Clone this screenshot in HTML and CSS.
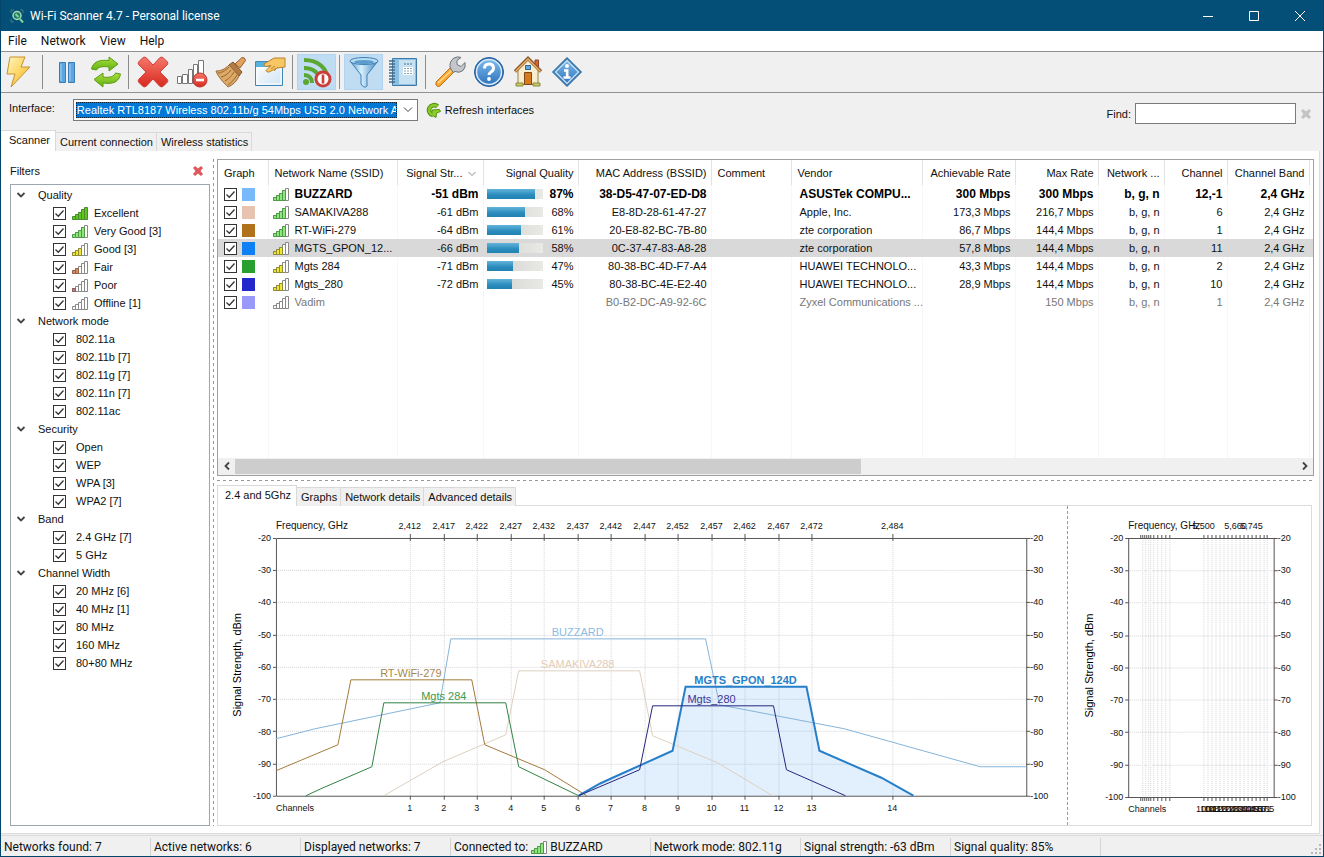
FILE: index.html
```html
<!DOCTYPE html>
<html lang="en">
<head>
<meta charset="utf-8">
<title>Wi-Fi Scanner 4.7 - Personal license</title>
<link rel="stylesheet" href="styles.css">
</head>
<body>
<svg class="defs" width="0" height="0" aria-hidden="true">
  <defs>
    <linearGradient id="gGold" x1="0" y1="0" x2="1" y2="1"><stop offset="0" stop-color="#fff6c0"/><stop offset=".5" stop-color="#fbd765"/><stop offset="1" stop-color="#eda52a"/></linearGradient>
    <linearGradient id="gBlue" x1="0" y1="0" x2="0" y2="1"><stop offset="0" stop-color="#7db9ea"/><stop offset="1" stop-color="#2f74bd"/></linearGradient>
    <linearGradient id="gGreen" x1="0" y1="0" x2="0" y2="1"><stop offset="0" stop-color="#a9e03c"/><stop offset="1" stop-color="#5fae10"/></linearGradient>
    <linearGradient id="gRed" x1="0" y1="0" x2="0" y2="1"><stop offset="0" stop-color="#f5776a"/><stop offset="1" stop-color="#d8291f"/></linearGradient>
    <linearGradient id="gIce" x1="0" y1="0" x2="1" y2="0"><stop offset="0" stop-color="#4f97cf"/><stop offset=".4" stop-color="#d9f0fc"/><stop offset="1" stop-color="#3f86c2"/></linearGradient>
    <linearGradient id="gPage" x1="0" y1="0" x2="1" y2="1"><stop offset="0" stop-color="#ffffff"/><stop offset="1" stop-color="#cfe3f3"/></linearGradient>
    <path id="bars" d="M.5 10.500h3v3h-3zM3.500 8.500h3v5h-3zM6.500 6.500h3v7h-3zM9.500 3.500h3v10h-3zM12.500 1.500h3v12h-3z"/>
    <symbol id="q5" viewBox="0 0 16 14"><use href="#bars" fill="#5fc81e" stroke="#4c8a30"/></symbol>
    <symbol id="q4" viewBox="0 0 16 14"><use href="#bars" fill="#fff" stroke="#888"/><path d="M.5 10.500h3v3h-3zM3.500 8.500h3v5h-3zM6.500 6.500h3v7h-3zM9.500 3.500h3v10h-3z" fill="#8fe67c" stroke="#4f9a48"/></symbol>
    <symbol id="q3" viewBox="0 0 16 14"><use href="#bars" fill="#fff" stroke="#888"/><path d="M.5 10.500h3v3h-3zM3.500 8.500h3v5h-3zM6.500 6.500h3v7h-3z" fill="#f0e63a" stroke="#8f8a34"/></symbol>
    <symbol id="q2" viewBox="0 0 16 14"><use href="#bars" fill="#fff" stroke="#888"/><path d="M.5 10.500h3v3h-3zM3.500 8.500h3v5h-3z" fill="#d98a5c" stroke="#94664c"/></symbol>
    <symbol id="q1" viewBox="0 0 16 14"><use href="#bars" fill="#fff" stroke="#888"/><path d="M.5 10.500h3v3h-3z" fill="#c08080" stroke="#8a5a5a"/></symbol>
    <symbol id="q0" viewBox="0 0 16 14"><use href="#bars" fill="#fff" stroke="#888"/></symbol>
    <symbol id="chev" viewBox="0 0 10 10"><path d="M1.500 3l3.500 3.500L8.500 3" fill="none" stroke="#444" stroke-width="1.800"/></symbol>
    <symbol id="cross" viewBox="0 0 12 12"><path d="M1 3l2-2 3 2.500L9 1l2 2-2.500 3L11 9l-2 2-3-2.500L3 11 1 9l2.500-3z"/></symbol>
  </defs>
</svg>

<div class="window">
  <header class="titlebar">
    <svg class="app-icon" width="14" height="14" viewBox="0 0 14 14"><path d="M1 4V1h3M10 1h3v3M1 10v3h3" fill="none" stroke="#3f7f7a"/><circle cx="7" cy="6.500" r="4" fill="#1c7a63" stroke="#a9d8b8" stroke-width="1.500"/><path d="M5.500 5l3 3M10 10l3 3.500" stroke="#7cd89a" stroke-width="2"/></svg>
    <h1>Wi-Fi Scanner 4.7 - Personal license</h1>
    <div class="win-controls">
      <button aria-label="Minimize"><svg width="10" height="10"><path d="M0 5.500h10" stroke="#fff"/></svg></button>
      <button aria-label="Maximize"><svg width="10" height="10"><path d="M.5.5h9v9h-9z" fill="none" stroke="#fff"/></svg></button>
      <button aria-label="Close"><svg width="10" height="10"><path d="M0 0l10 10M10 0L0 10" stroke="#fff"/></svg></button>
    </div>
  </header>

  <nav class="menubar">
    <button>File</button><button>Network</button><button>View</button><button>Help</button>
  </nav>

  <div class="toolbar" role="toolbar" aria-label="Main toolbar">
    <button aria-label="Start scan"><svg width="32" height="32" viewBox="0 0 32 32"><path d="M7 1h15l-4 10h9L8 31l4-13H4z" fill="url(#gGold)" stroke="#c9922c" stroke-linejoin="round"/></svg></button>
    <span class="sep"></span>
    <button aria-label="Pause"><svg width="32" height="32" viewBox="0 0 32 32"><path d="M8.500 6.500h6v20h-6zM17.500 6.500h6v20h-6z" fill="#5ba6e0" stroke="#3b7cb4"/><path d="M10 8v17M19 8v17" stroke="#a5d3f4"/></svg></button>
    <button aria-label="Rescan"><svg width="32" height="32" viewBox="0 0 32 32" fill="url(#gGreen)" stroke="#5c9a14"><path d="M1.500 13C3 6 9 3.500 19 4.500V1l9 7-9 7v-4C12 10 8 11 6.500 14z"/><path d="M30.500 18C29 26 23 28.500 13 27v4l-9-7.500 9-6.500v4c7 1 11-.5 12.500-4z"/></svg></button>
    <span class="sep"></span>
    <button aria-label="Delete"><svg width="32" height="32" viewBox="0 0 32 32"><path d="M1.500 6L6 1.500q2-1 3.500.5L16 9l6.500-7q1.500-1.500 3.500-.5L30.500 6q.8 1.500-.5 3l-7 7 7 7q1.300 1.500.5 3L26 30.500q-2 1-3.500-.5L16 23l-6.500 7q-1.500 1.500-3.500.5L1.500 26q-.8-1.500.5-3l7-7-7-7q-1.300-1.500-.5-3z" fill="url(#gRed)" stroke="#cf4339"/></svg></button>
    <button aria-label="Remove inactive networks"><svg width="32" height="32" viewBox="0 0 32 32"><path d="M1.500 20.500h4v7h-4zM6.500 18.500h5v9h-5zM12.500 13.500h4v14h-4zM17.500 8.500h4v19h-4zM22.500 4.500h5v23h-5z" fill="#fff" stroke="#777"/><circle cx="24" cy="24" r="7" fill="url(#gRed)" stroke="#b9352c"/><path d="M20 24h8" stroke="#fff" stroke-width="2.600"/></svg></button>
    <button aria-label="Clear"><svg width="32" height="32" viewBox="0 0 32 32"><path d="M20 8l7-6.500q3-.5 3.500 3L25 12z" fill="#e2a05c" stroke="#96602e"/><path d="M14 9l4-3 9 10-3 4z" fill="#b37a43" stroke="#7d5128"/><path d="M14 9l10 11c-2 5-6 9-11 11C9 27 3 21 1 15c5 0 9-2 13-6z" fill="#dda966" stroke="#9a6c38"/><path d="M14 11C10 15 6 17 3 17M16 14c-3 4-6 6-10 7M19 16c-3 5-6 7-9 9M22 19c-3 5-5 7-9 10" fill="none" stroke="#946530"/></svg></button>
    <button aria-label="Properties"><svg width="32" height="32" viewBox="0 0 32 32"><path d="M1.500 5.500h27v24h-27z" fill="url(#gPage)" stroke="#3f88b8"/><path d="M2 6h26v5H2z" fill="#58b0dc"/><path d="M3 12h24v16H3z" fill="none" stroke="#fff"/><path d="M31 2H20l-5 3-5 3q0 2 2 2.500l5-1-5 5q.5 2 3 1.500l8-4 8-1z" fill="#f7c766" stroke="#b8822c"/><path d="M17 13l4-3M20 15l4-4" stroke="#b8822c"/></svg></button>
    <span class="sep"></span>
    <button class="on" aria-pressed="true" aria-label="Signal alerts"><svg width="32" height="32" viewBox="0 0 32 32"><g fill="none" stroke="#5aa832" stroke-width="4"><path d="M3 4c14 0 24 8 24 22"/><path d="M3 12c9 0 16 5 16 14"/><path d="M3 19c5 0 8 3 8 8"/></g><circle cx="5" cy="26" r="3" fill="#5aa832"/><circle cx="22" cy="23" r="7" fill="#fff" stroke="#ca3f38" stroke-width="3"/><path d="M22 18.500v9" stroke="#ca3f38" stroke-width="2.600"/></svg></button>
    <span class="sep"></span>
    <button class="on" aria-pressed="true" aria-label="Filters"><svg width="32" height="32" viewBox="0 0 32 32"><path d="M2 5l11 14v9q3 5 6 2V19L30 5z" fill="url(#gIce)" stroke="#3f80b4"/><ellipse cx="16" cy="5" rx="14" ry="3.500" fill="#b9def4" stroke="#3f80b4"/><ellipse cx="16" cy="6" rx="10" ry="2" fill="#5c9dcd"/></svg></button>
    <button aria-label="Details"><svg width="32" height="32" viewBox="0 0 32 32"><path d="M5.500 2.500h24v27h-24z" fill="#8fc0e2" stroke="#3d7aa8"/><path d="M12 4h16v24H12z" fill="#c5e1f2"/><path d="M9 4h3v24H9z" fill="#8cc0e2"/><path d="M17 8h8" stroke="#45799f" stroke-dasharray="2 1"/><path d="M16 11h10v8H16z" fill="#fff"/><path d="M17 12.500h8M17 15h8M17 17.500h8" stroke="#8ba4b5" stroke-dasharray="2 1"/><path d="M2 5h6M2 8h6M2 11h6M2 14h6M2 17h6M2 20h6M2 23h6M2 26h6" stroke="#456b88" stroke-width="1.500"/></svg></button>
    <span class="sep"></span>
    <button aria-label="Settings"><svg width="32" height="32" viewBox="0 0 32 32"><path d="M2 26L17 11l4 4L6 30q-3 1.500-4-1z" fill="#f8a833" stroke="#bd711a"/><path d="M4 27l14-13" stroke="#ffd98a" stroke-width="1.500"/><path d="M16 11q-.5-6 4-9 4-2 7-.5l-4 3v4l4 2 4-4q1 5-2 8-4 3-8 1l-2 1z" fill="#c3c6ca" stroke="#6f7479"/></svg></button>
    <button aria-label="Help"><svg width="32" height="32" viewBox="0 0 32 32"><circle cx="16" cy="16" r="14.500" fill="#2f6fb2" stroke="#2a5f98"/><circle cx="16" cy="16" r="12.500" fill="url(#gBlue)" stroke="#d8ebfa" stroke-width="1.500"/><path d="M11.500 12.500q0-4.500 4.500-4.500t4.500 4q0 2.500-2.500 4-2 1.200-2 3" fill="none" stroke="#fff" stroke-width="3"/><circle cx="16" cy="23" r="1.900" fill="#fff"/></svg></button>
    <button aria-label="Home page"><svg width="32" height="32" viewBox="0 0 32 32"><path d="M23 4h3.500v9H23z" fill="#d9653b" stroke="#8d4427"/><path d="M6 14L16 4l10 10v14.500H6z" fill="#f8edcc" stroke="#9a8048"/><path d="M3 15.500L16 2.500l13 13" fill="none" stroke="#8b5a2b" stroke-width="3.400"/><path d="M3.500 15.500L16 3l12.500 12.500" fill="none" stroke="#eeb66f" stroke-width="1.400"/><path d="M13.500 9.500h5v4h-5z" fill="#69a8dc" stroke="#2d6598"/><path d="M12.500 16.500h7v12h-7z" fill="#d67a1e" stroke="#7e4715"/><path d="M4 27h7v3H4zM21 27h7v3h-7z" fill="#c8c96c" stroke="#8a8a3d"/></svg></button>
    <button aria-label="About"><svg width="32" height="32" viewBox="0 0 32 32"><path d="M16 1.500L30.500 16 16 30.500 1.500 16z" fill="#3d80b8" stroke="#2f6795" stroke-linejoin="round"/><path d="M16 4.500L27.500 16 16 27.500 4.500 16z" fill="url(#gBlue)" stroke="#cfe6f6" stroke-width="1.200"/><circle cx="16" cy="10" r="2" fill="#fff"/><path d="M13 14.500h3.200V21M12.500 21.500h7" fill="none" stroke="#fff" stroke-width="2.600"/></svg></button>
  </div>

  <div class="iface-bar">
    <label for="iface">Interface:</label>
    <div class="combo">
      <select id="iface"><option>Realtek RTL8187 Wireless 802.11b/g 54Mbps USB 2.0 Network A</option></select>
      <svg width="10" height="6" viewBox="0 0 10 6"><path d="M1 .5l4 4 4-4" fill="none" stroke="#444"/></svg>
    </div>
    <button class="refresh"><svg width="15" height="16" viewBox="0 0 15 16"><path d="M11.500 4.500A5 5 0 1 0 7 13" fill="none" stroke="#56900f" stroke-width="4.600"/><path d="M6 8l7.500-.5 1 2-4 1.500-.5 4.500L6 13z" fill="#8ccf2e" stroke="#56900f"/><path d="M11.500 4.500A5 5 0 1 0 7 13" fill="none" stroke="#86c92b" stroke-width="2.600"/></svg>Refresh interfaces</button>
    <div class="find">
      <label for="find">Find:</label>
      <input id="find" type="text">
      <button aria-label="Clear search"><svg width="12" height="12" fill="#c4c4c4"><use href="#cross"/></svg></button>
    </div>
  </div>

  <div class="tabs main-tabs" role="tablist">
    <button class="tab active" role="tab" aria-selected="true">Scanner</button>
    <button class="tab" role="tab">Current connection</button>
    <button class="tab" role="tab">Wireless statistics</button>
  </div>

  <main class="page">
    <aside class="filters">
      <div class="filters-head"><h2>Filters</h2><button aria-label="Close filters"><svg width="12" height="12" fill="#e0575c"><use href="#cross"/></svg></button></div>
      <div class="tree">
        <section>
          <button class="group"><svg width="10" height="10"><use href="#chev"/></svg>Quality</button>
          <label><input type="checkbox" checked><svg width="16" height="14"><use href="#q5"/></svg>Excellent</label>
          <label><input type="checkbox" checked><svg width="16" height="14"><use href="#q4"/></svg>Very Good [3]</label>
          <label><input type="checkbox" checked><svg width="16" height="14"><use href="#q3"/></svg>Good [3]</label>
          <label><input type="checkbox" checked><svg width="16" height="14"><use href="#q2"/></svg>Fair</label>
          <label><input type="checkbox" checked><svg width="16" height="14"><use href="#q1"/></svg>Poor</label>
          <label><input type="checkbox" checked><svg width="16" height="14"><use href="#q0"/></svg>Offline [1]</label>
        </section>
        <section>
          <button class="group"><svg width="10" height="10"><use href="#chev"/></svg>Network mode</button>
          <label><input type="checkbox" checked><span>802.11a</span></label>
          <label><input type="checkbox" checked><span>802.11b [7]</span></label>
          <label><input type="checkbox" checked><span>802.11g [7]</span></label>
          <label><input type="checkbox" checked><span>802.11n [7]</span></label>
          <label><input type="checkbox" checked><span>802.11ac</span></label>
        </section>
        <section>
          <button class="group"><svg width="10" height="10"><use href="#chev"/></svg>Security</button>
          <label><input type="checkbox" checked><span>Open</span></label>
          <label><input type="checkbox" checked><span>WEP</span></label>
          <label><input type="checkbox" checked><span>WPA [3]</span></label>
          <label><input type="checkbox" checked><span>WPA2 [7]</span></label>
        </section>
        <section>
          <button class="group"><svg width="10" height="10"><use href="#chev"/></svg>Band</button>
          <label><input type="checkbox" checked><span>2.4 GHz [7]</span></label>
          <label><input type="checkbox" checked><span>5 GHz</span></label>
        </section>
        <section>
          <button class="group"><svg width="10" height="10"><use href="#chev"/></svg>Channel Width</button>
          <label><input type="checkbox" checked><span>20 MHz [6]</span></label>
          <label><input type="checkbox" checked><span>40 MHz [1]</span></label>
          <label><input type="checkbox" checked><span>80 MHz</span></label>
          <label><input type="checkbox" checked><span>160 MHz</span></label>
          <label><input type="checkbox" checked><span>80+80 MHz</span></label>
        </section>
      </div>
    </aside>

    <div class="vsplit"></div>

    <div class="work">
      <div class="list">
        <div class="list-body">
        <table>
          <colgroup><col class="c50"><col class="c129"><col class="c86"><col class="c95"><col class="c133"><col class="c80"><col class="c131"><col class="c93"><col class="c83"><col class="c66"><col class="c63"><col class="c82"><col></colgroup>
          <thead><tr><th class="l">Graph</th><th class="l">Network Name (SSID)</th><th class="sort">Signal Str...<svg width="8" height="6" viewBox="0 0 8 6"><path d="M.5 1L4 4.500 7.500 1" fill="none" stroke="#888"/></svg></th><th>Signal Quality</th><th>MAC Address (BSSID)</th><th class="l">Comment</th><th class="l">Vendor</th><th>Achievable Rate</th><th>Max Rate</th><th>Network ...</th><th>Channel</th><th>Channel Band</th><th></th></tr></thead>
          <tbody>
            <tr class="connected"><td><div class="pick"><input type="checkbox" checked aria-label="Show BUZZARD"><i class="sw s1"></i></div></td><td><div class="ssid"><svg width="16" height="14"><use href="#q4"/></svg>BUZZARD</div></td><td>-51 dBm</td><td><div class="qual"><span class="bar"><span style="width:87%"></span></span>87%</div></td><td>38-D5-47-07-ED-D8</td><td></td><td class="l">ASUSTek COMPU...</td><td>300 Mbps</td><td>300 Mbps</td><td>b, g, n</td><td>12,-1</td><td>2,4 GHz</td><td></td></tr>
            <tr><td><div class="pick"><input type="checkbox" checked aria-label="Show SAMAKIVA288"><i class="sw s2"></i></div></td><td><div class="ssid"><svg width="16" height="14"><use href="#q4"/></svg>SAMAKIVA288</div></td><td>-61 dBm</td><td><div class="qual"><span class="bar"><span style="width:68%"></span></span>68%</div></td><td>E8-8D-28-61-47-27</td><td></td><td class="l">Apple, Inc.</td><td>173,3 Mbps</td><td>216,7 Mbps</td><td>b, g, n</td><td>6</td><td>2,4 GHz</td><td></td></tr>
            <tr><td><div class="pick"><input type="checkbox" checked aria-label="Show RT-WiFi-279"><i class="sw s3"></i></div></td><td><div class="ssid"><svg width="16" height="14"><use href="#q4"/></svg>RT-WiFi-279</div></td><td>-64 dBm</td><td><div class="qual"><span class="bar"><span style="width:61%"></span></span>61%</div></td><td>20-E8-82-BC-7B-80</td><td></td><td class="l">zte corporation</td><td>86,7 Mbps</td><td>144,4 Mbps</td><td>b, g, n</td><td>1</td><td>2,4 GHz</td><td></td></tr>
            <tr class="selected"><td><div class="pick"><input type="checkbox" checked aria-label="Show MGTS_GPON_124D"><i class="sw s4"></i></div></td><td><div class="ssid"><svg width="16" height="14"><use href="#q3"/></svg>MGTS_GPON_12...</div></td><td>-66 dBm</td><td><div class="qual"><span class="bar"><span style="width:58%"></span></span>58%</div></td><td>0C-37-47-83-A8-28</td><td></td><td class="l">zte corporation</td><td>57,8 Mbps</td><td>144,4 Mbps</td><td>b, g, n</td><td>11</td><td>2,4 GHz</td><td></td></tr>
            <tr><td><div class="pick"><input type="checkbox" checked aria-label="Show Mgts 284"><i class="sw s5"></i></div></td><td><div class="ssid"><svg width="16" height="14"><use href="#q3"/></svg>Mgts 284</div></td><td>-71 dBm</td><td><div class="qual"><span class="bar"><span style="width:47%"></span></span>47%</div></td><td>80-38-BC-4D-F7-A4</td><td></td><td class="l">HUAWEI TECHNOLO...</td><td>43,3 Mbps</td><td>144,4 Mbps</td><td>b, g, n</td><td>2</td><td>2,4 GHz</td><td></td></tr>
            <tr><td><div class="pick"><input type="checkbox" checked aria-label="Show Mgts_280"><i class="sw s6"></i></div></td><td><div class="ssid"><svg width="16" height="14"><use href="#q3"/></svg>Mgts_280</div></td><td>-72 dBm</td><td><div class="qual"><span class="bar"><span style="width:45%"></span></span>45%</div></td><td>80-38-BC-4E-E2-40</td><td></td><td class="l">HUAWEI TECHNOLO...</td><td>28,9 Mbps</td><td>144,4 Mbps</td><td>b, g, n</td><td>10</td><td>2,4 GHz</td><td></td></tr>
            <tr class="offline"><td><div class="pick"><input type="checkbox" checked aria-label="Show Vadim"><i class="sw s7"></i></div></td><td><div class="ssid"><svg width="16" height="14"><use href="#q0"/></svg>Vadim</div></td><td></td><td></td><td>B0-B2-DC-A9-92-6C</td><td></td><td class="l">Zyxel Communications ...</td><td></td><td>150 Mbps</td><td>b, g, n</td><td>1</td><td>2,4 GHz</td><td></td></tr>
            <tr class="rest"><td></td><td></td><td></td><td></td><td></td><td></td><td></td><td></td><td></td><td></td><td></td><td></td><td></td></tr>
          </tbody>
        </table>
        </div>
        <div class="scroll">
          <button aria-label="Scroll left"><svg width="8" height="10" viewBox="0 0 8 10"><path d="M6 1.500L2.500 5 6 8.500" fill="none" stroke="#444" stroke-width="1.800"/></svg></button>
          <div class="track"><div class="thumb"></div></div>
          <button aria-label="Scroll right"><svg width="8" height="10" viewBox="0 0 8 10"><path d="M2 1.500L5.500 5 2 8.500" fill="none" stroke="#444" stroke-width="1.800"/></svg></button>
        </div>
      </div>

      <div class="hsplit"></div>

      <div class="tabs sub-tabs" role="tablist">
        <button class="tab active" role="tab" aria-selected="true">2.4 and 5Ghz</button>
        <button class="tab" role="tab">Graphs</button>
        <button class="tab" role="tab">Network details</button>
        <button class="tab" role="tab">Advanced details</button>
      </div>

      <div class="charts">
        <svg class="chart wide" viewBox="0 0 850 318" role="img" aria-label="2.4 GHz channels">
          <text class="axis-title" transform="translate(23 159) rotate(-90)">Signal Strength, dBm</text>
          <g transform="translate(58 32)">
            <path class="grid" d="M134.500 0v258M168.500 0v258M201.500 0v258M235.500 0v258M268.500 0v258M302.500 0v258M335.500 0v258M369.500 0v258M402.500 0v258M436.500 0v258M469.500 0v258M503.500 0v258M536.500 0v258M617.500 0v258M0 32.500h751M0 64.500h751M0 97.500h751M0 129.500h751M0 161.500h751M0 193.500h751M0 226.500h751"/>
            <path class="axis" d="M.5.5h751v258H.5zM134.500-4v7M168.500-4v7M201.500-4v7M235.500-4v7M268.500-4v7M302.500-4v7M335.500-4v7M369.500-4v7M402.500-4v7M436.500-4v7M469.500-4v7M503.500-4v7M536.500-4v7M617.500-4v7M134.500 258v4M168.500 258v4M201.500 258v4M235.500 258v4M268.500 258v4M302.500 258v4M335.500 258v4M369.500 258v4M402.500 258v4M436.500 258v4M469.500 258v4M503.500 258v4M536.500 258v4M617.500 258v4M-3 .5H0M-3 32.500H0M-3 64.500H0M-3 97.500H0M-3 129.500H0M-3 161.500H0M-3 193.500H0M-3 226.500H0M-3 258.500H0M751 .5h4M751 32.500h4M751 64.500h4M751 97.500h4M751 129.500h4M751 161.500h4M751 193.500h4M751 226.500h4M751 258.500h4"/>
            <path class="hot-fill" d="M303 258l21-12 13-6 60-27 13-64h121l13 64 62 27 32 18z"/>
            <path class="ln sam" d="M108 258l59-34 63-27 13-64h121l13 65 65 27 55 33"/>
            <path class="ln buz" d="M0 201l39-10 125-26 11-64h255l14 66 125 24 136 38h46"/>
            <path class="ln rtw" d="M0 233l62-26 13-65h121l13 65 60 25 42 26"/>
            <path class="ln m284" d="M30 258l15-7 51-22 12-64h122l13 64 60 29"/>
            <path class="ln hot" d="M303 258l21-12 13-6 60-27 13-64h121l13 64 62 27 32 18"/>
            <path class="ln m280" d="M303 258l61-26 13-64h121l13 64 59 26"/>
            <g class="ser" text-anchor="middle">
              <text class="t-buz" x="302" y="98">BUZZARD</text><text class="t-sam" x="302" y="130">SAMAKIVA288</text><text class="t-rtw" x="135" y="139">RT-WiFi-279</text><text class="t-m284" x="168" y="162">Mgts 284</text><text class="t-hot" x="470" y="146">MGTS_GPON_124D</text><text class="t-m280" x="436" y="165">Mgts_280</text>
            </g>
            <g class="tick">
              <text class="cap" x="0" y="-9">Frequency, GHz</text><text x="0" y="273">Channels</text>
              <g text-anchor="middle"><text x="134" y="-9">2,412</text><text x="168" y="-9">2,417</text><text x="201" y="-9">2,422</text><text x="235" y="-9">2,427</text><text x="268" y="-9">2,432</text><text x="302" y="-9">2,437</text><text x="335" y="-9">2,442</text><text x="369" y="-9">2,447</text><text x="402" y="-9">2,452</text><text x="436" y="-9">2,457</text><text x="469" y="-9">2,462</text><text x="503" y="-9">2,467</text><text x="536" y="-9">2,472</text><text x="617" y="-9">2,484</text>
              <text x="134" y="273">1</text><text x="168" y="273">2</text><text x="201" y="273">3</text><text x="235" y="273">4</text><text x="268" y="273">5</text><text x="302" y="273">6</text><text x="335" y="273">7</text><text x="369" y="273">8</text><text x="402" y="273">9</text><text x="436" y="273">10</text><text x="469" y="273">11</text><text x="503" y="273">12</text><text x="536" y="273">13</text><text x="617" y="273">14</text></g>
              <g text-anchor="end"><text x="-5" y="3">-20</text><text x="-5" y="35">-30</text><text x="-5" y="67">-40</text><text x="-5" y="100">-50</text><text x="-5" y="132">-60</text><text x="-5" y="164">-70</text><text x="-5" y="197">-80</text><text x="-5" y="229">-90</text><text x="-5" y="261">-100</text></g>
              <g><text x="755" y="3">-20</text><text x="755" y="35">-30</text><text x="755" y="67">-40</text><text x="755" y="100">-50</text><text x="755" y="132">-60</text><text x="755" y="164">-70</text><text x="755" y="197">-80</text><text x="755" y="229">-90</text><text x="755" y="261">-100</text></g>
            </g>
          </g>
        </svg>
        <svg class="chart narrow" viewBox="0 0 242 318" role="img" aria-label="5 GHz channels">
          <text class="axis-title" transform="translate(25 159) rotate(-90)">Signal Strength, dBm</text>
          <g transform="translate(60 32)">
            <path class="grid" d="M14.500 0v258M17.500 0v258M20.500 0v258M22.500 0v258M25.500 0v258M29.500 0v258M33.500 0v258M37.500 0v258M41.500 0v258M75.500 0v258M79.500 0v258M83.500 0v258M87.500 0v258M91.500 0v258M95.500 0v258M99.500 0v258M103.500 0v258M107.500 0v258M111.500 0v258M115.500 0v258M119.500 0v258M123.500 0v258M127.500 0v258M131.500 0v258M135.500 0v258M138.500 0v258M0 32.500h145M0 64.500h145M0 97.500h145M0 129.500h145M0 161.500h145M0 193.500h145M0 226.500h145"/>
            <path class="axis" d="M.5.5h145v258H.5zM-3 .5H0M-3 32.500H0M-3 64.500H0M-3 97.500H0M-3 129.500H0M-3 161.500H0M-3 193.500H0M-3 226.500H0M-3 258.500H0M145 .5h4M145 32.500h4M145 64.500h4M145 97.500h4M145 129.500h4M145 161.500h4M145 193.500h4M145 226.500h4M145 258.500h4"/>
            <path id="t5" class="axis" d="M12.500-3v3M14.500-3v3M16.500-3v3M18.500-3v3M20.500-3v3M22.500-3v3M25.500-3v3M29.500-3v3M33.500-3v3M37.500-3v3M41.500-3v3M75.500-3v3M79.500-3v3M83.500-3v3M87.500-3v3M91.500-3v3M95.500-3v3M99.500-3v3M103.500-3v3M107.500-3v3M111.500-3v3M115.500-3v3M119.500-3v3M123.500-3v3M127.500-3v3M131.500-3v3M135.500-3v3M138.500-3v3"/>
            <use href="#t5" y="262"/>
            <g class="tick">
              <text class="cap" x="0" y="-9">Frequency, GHz</text><text x="0" y="273">Channels</text>
              <g text-anchor="middle"><text x="75" y="-9">5,500</text><text x="107" y="-9">5,660</text><text x="123" y="-9">5,745</text>
              <text x="75" y="273">100</text><text x="79" y="273">104</text><text x="83" y="273">108</text><text x="87" y="273">112</text><text x="91" y="273">116</text><text x="95" y="273">120</text><text x="99" y="273">124</text><text x="103" y="273">128</text><text x="107" y="273">132</text><text x="111" y="273">136</text><text x="115" y="273">140</text><text x="119" y="273">144</text><text x="123" y="273">149</text><text x="127" y="273">153</text><text x="131" y="273">157</text><text x="135" y="273">161</text><text x="138" y="273">165</text></g>
              <g text-anchor="end"><text x="-5" y="3">-20</text><text x="-5" y="35">-30</text><text x="-5" y="67">-40</text><text x="-5" y="100">-50</text><text x="-5" y="132">-60</text><text x="-5" y="164">-70</text><text x="-5" y="197">-80</text><text x="-5" y="229">-90</text><text x="-5" y="261">-100</text></g>
              <g><text x="149" y="3">-20</text><text x="149" y="35">-30</text><text x="149" y="67">-40</text><text x="149" y="100">-50</text><text x="149" y="132">-60</text><text x="149" y="164">-70</text><text x="149" y="197">-80</text><text x="149" y="229">-90</text><text x="149" y="261">-100</text></g>
            </g>
          </g>
        </svg>
      </div>
    </div>
  </main>

  <footer class="status">
    <span>Networks found: 7</span><span>Active networks: 6</span><span>Displayed networks: 7</span><span class="w">Connected to: <svg width="16" height="14"><use href="#q4"/></svg> BUZZARD</span><span>Network mode: 802.11g</span><span>Signal strength: -63 dBm</span><span>Signal quality: 85%</span>
    <svg class="grip" width="10" height="10" fill="#b8b8b8"><path d="M8 0h2v2H8zM8 4h2v2H8zM8 8h2v2H8zM4 4h2v2H4zM4 8h2v2H4zM0 8h2v2H0z"/></svg>
  </footer>
</div>
</body>
</html>
```
FILE: styles.css
```css
* { box-sizing: border-box; }
body {
  margin: 0;
  font: 11px/18px "Liberation Sans", Arial, sans-serif;
  color: #111;
  background: #f0f0f0;
}
button, input, select { font: inherit; color: inherit; margin: 0; }
button { background: none; border: 0; padding: 0; }
svg { flex: none; display: block; }
h1, h2 { margin: 0; font: inherit; }
.defs { position: absolute; }

.window {
  min-height: 100vh;
  display: flex;
  flex-direction: column;
  border: solid #04466b;
  border-width: 0 1px 1px;
}

/* Title bar and menu */
.titlebar {
  height: 31px;
  display: flex;
  align-items: center;
  background: #044f78;
  color: #fff;
  font: 12px/16px Roboto, "Open Sans", sans-serif;
}
.app-icon { margin: 0 6px 0 9px; }
.win-controls { display: flex; margin-left: auto; }
.win-controls button { width: 46px; height: 30px; display: grid; place-items: center; }
.menubar {
  height: 20px;
  display: flex;
  gap: 14px;
  padding-left: 7px;
  background: #fff;
  font: 12px/20px Roboto, "Open Sans", sans-serif;
}

/* Toolbar */
.toolbar {
  height: 42px;
  display: flex;
  align-items: center;
  border: solid #919191;
  border-width: 1px 0;
}
.toolbar button { width: 39px; height: 36px; display: grid; place-items: center; }
.toolbar button:first-child { width: 38px; padding-right: 2px; }
.toolbar .on { background: #bfdcf3; border: 1px solid #b1d3ef; }
.sep { width: 1px; height: 34px; margin: 0 4px 0 3px; background: #8c8c8c; }

/* Interface row */
.iface-bar { height: 37px; display: flex; align-items: flex-start; padding: 6px 9px 0 8px; }
.combo {
  width: 345px;
  height: 22px;
  margin-left: 18px;
  display: flex;
  align-items: center;
  background: #fff;
  border: 1px solid #7a7a7a;
  padding: 2px;
}
.combo select {
  flex: 1;
  min-width: 0;
  height: 16px;
  line-height: 14px;
  appearance: none;
  background: #0078d7;
  color: #fff;
  border: 1px dotted #123;
  border-radius: 0;
  padding: 0;
}
.combo svg { margin: 0 2px 0 6px; }
.refresh { display: flex; align-items: center; gap: 4px; margin-left: 8px; height: 22px; }
.find { display: flex; align-items: center; margin: 4px 0 0 auto; height: 21px; gap: 4px; }
.find input { width: 161px; height: 21px; border: 1px solid #7a7a7a; background: #fff; padding: 0 3px; }
.find button { width: 14px; }

/* Tabs */
.tabs { display: flex; align-items: flex-end; height: 21px; }
.tab {
  height: 19px;
  line-height: 18px;
  padding: 0 3px 0 4px;
  background: #f0f0f0;
  border: solid #d9d9d9;
  border-width: 1px 1px 0 0;
}
.tab.active { height: 21px; background: #fff; padding: 0 5px 2px 7px; border-left-width: 1px; }
.main-tabs .active { border-left-width: 0; padding-left: 8px; }

/* Page */
.page {
  flex: 1;
  display: flex;
  margin-right: 3px;
  padding: 8px 5px 7px 9px;
  background: #fff;
  border: solid #dcdcdc;
  border-width: 0 1px 1px 0;
}
.filters { width: 200px; display: flex; flex-direction: column; }
.filters-head { height: 25px; display: flex; justify-content: space-between; align-items: center; padding: 0 6px 2px 0; }
.tree { flex: 1; border: 1px solid #9aa7b0; padding: 1px 0; }
.tree section { display: flex; flex-direction: column; }
.group { display: flex; align-items: center; gap: 12px; height: 18px; padding-left: 5px; }
.tree label { display: flex; align-items: center; height: 18px; padding-left: 42px; gap: 6px; }
.tree label span { margin-left: 4px; }
input[type="checkbox"] {
  appearance: none;
  flex: none;
  width: 13px;
  height: 13px;
  border: 1px solid #333;
  background: #fff url("data:image/svg+xml,%3Csvg xmlns='http://www.w3.org/2000/svg' viewBox='0 0 11 11'%3E%3Cpath d='M1.500 5.500l2.800 2.700L9.500 2.500' fill='none' stroke='%23333' stroke-width='1.300'/%3E%3C/svg%3E");
}
.vsplit {
  width: 1px;
  margin: 0 3px;
  background: repeating-linear-gradient(#999 0 3px, transparent 3px 6px);
}
.hsplit {
  height: 1px;
  margin: 4px 0;
  background: repeating-linear-gradient(90deg, #999 0 3px, transparent 3px 6px);
}
.work { flex: 1; min-width: 0; display: flex; flex-direction: column; }

/* Network list */
.list { flex: 1; display: flex; flex-direction: column; border: 1px solid #a0a0a0; }
.list-body { flex: 1; display: grid; overflow: hidden; }
table { width: 100%; height: 100%; table-layout: fixed; border-collapse: collapse; }
.c50 { width: 50px; } .c129 { width: 129px; } .c86 { width: 86px; } .c95 { width: 95px; }
.c133 { width: 133px; } .c80 { width: 80px; } .c131 { width: 131px; } .c93 { width: 93px; }
.c83 { width: 83px; } .c66 { width: 66px; } .c63 { width: 63px; } .c82 { width: 82px; }
th, td {
  height: 18px;
  padding: 0 4px 0 0;
  font-weight: normal;
  text-align: right;
  white-space: nowrap;
  border-right: 1px solid #f7f7f7;
}
th { height: 25px; border-color: #e3e3e3; }
th:last-child, td:last-child { border: 0; }
th.l { text-align: left; padding-left: 6px; }
td.l { text-align: left; padding-left: 8px; }
.sort svg { display: inline-block; margin: 0 3px 0 5px; }
.connected { font-size: 12px; font-weight: bold; color: #000; }
.connected td { font-weight: bold; }
.selected { background: #d9d9d9; }
.selected td { border-color: #d9d9d9; }
.offline { color: #777; }
.rest td { height: auto; }
.pick { display: flex; gap: 5px; padding-left: 6px; }
.ssid { display: flex; align-items: center; gap: 6px; padding-left: 4px; }
.sw { width: 13px; height: 13px; }
.s1 { background: #78b9f9; } .s2 { background: #e8c3b0; } .s3 { background: #b0731c; }
.s4 { background: #0f80f4; } .s5 { background: #289f2e; } .s6 { background: #2427cc; } .s7 { background: #9899f8; }
.qual { display: flex; align-items: center; justify-content: space-between; padding-left: 3px; }
.bar { width: 56px; height: 10px; background: linear-gradient(90deg, #cfcfcf, #e9e9e5); }
.bar span { display: block; height: 100%; background: linear-gradient(#63b3da, #2a8cbd 60%, #2382b2); }

.scroll { height: 17px; display: flex; background: #f0f0f0; }
.scroll button { width: 17px; display: grid; place-items: center; }
.track { flex: 1; }
.thumb { width: 59%; height: 15px; margin: 1px 0; background: #cdcdcd; }

/* Charts */
.charts { display: flex; align-items: flex-start; border: 1px solid #dcdcdc; margin: -1px 2px 0 0; }
.sub-tabs { position: relative; }
.chart { min-width: 0; font-family: "Liberation Sans", Arial, sans-serif; }
.wide { flex: 850 1 0; }
.narrow { flex: 243 1 0; border-left: 1px dashed #999; }
.grid { fill: none; stroke: #d6d6d6; stroke-dasharray: 1 1; }
.axis { fill: none; stroke: #555; }
.axis-title { font-size: 11px; text-anchor: middle; }
.tick { font-size: 9px; fill: #111; }
.tick .cap { font-size: 10px; }
.ser { font-size: 11px; }
.ln { fill: none; }
.buz { stroke: #85b4da; } .t-buz { fill: #8bbbe3; }
.sam { stroke: #ddd0c0; } .t-sam { fill: #e3ccb8; }
.rtw { stroke: #a37a3a; } .t-rtw { fill: #a8874d; }
.m284 { stroke: #318243; } .t-m284 { fill: #3c9950; }
.m280 { stroke: #25257c; } .t-m280 { fill: #3b3699; }
.hot { stroke: #277fc9; stroke-width: 2; } .t-hot { fill: #277fc9; font-weight: bold; }
.hot-fill { fill: #4a9cf5; fill-opacity: .16; }

/* Status bar */
.status {
  height: 21px;
  display: flex;
  align-items: flex-end;
  margin-top: 1px;
  border-top: 1px solid #dcdcdc;
  font: 12px/20px Roboto, "Open Sans", sans-serif;
}
.status span {
  width: 150px;
  height: 18px;
  display: flex;
  align-items: center;
  gap: 3px;
  padding-left: 3px;
  white-space: nowrap;
  border-right: 1px solid #d4d4d4;
}
.status .w { width: 200px; }
.grip { margin: 0 2px 2px auto; }
```
